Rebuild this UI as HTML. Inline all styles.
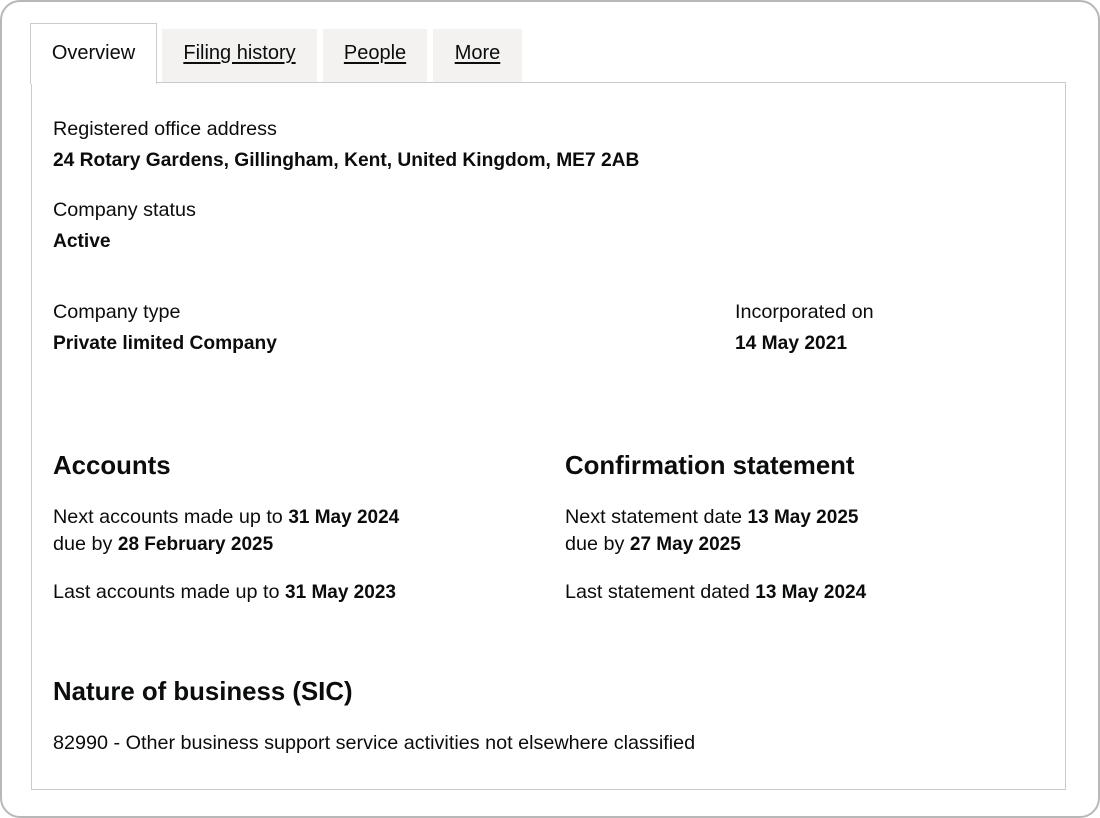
<!DOCTYPE html>
<html><head><meta charset="utf-8"><style>
*{margin:0;padding:0;box-sizing:border-box}
body{width:1100px;height:818px;background:#fff;font-family:"Liberation Sans",Arial,sans-serif;color:#0b0c0c;position:relative;overflow:hidden}
.frame{position:absolute;left:0;top:0;width:1100px;height:818px;border:2px solid #b8b8b8;border-radius:20px}
.panel{position:absolute;left:31px;top:82px;width:1035px;height:708px;border:1px solid #cbcbcb}
.tab{position:absolute;top:29px;height:53px;background:#f3f2f1;font-size:20px;line-height:49px;text-align:center;text-decoration:underline;text-underline-offset:3px}
.active{position:absolute;left:30px;top:23px;width:127px;height:61px;background:#fff;border:1px solid #cbcbcb;border-bottom:none;font-size:20px;line-height:58px;text-align:center}
.t{position:absolute;font-size:19.8px;white-space:nowrap;line-height:22px}
.t b{font-size:19px}
.b{font-weight:bold;font-size:19.2px}
.h{position:absolute;font-size:25.8px;font-weight:bold;white-space:nowrap;line-height:28px}
</style></head><body>
<div class="frame"></div>
<div class="panel"></div>
<div class="active">Overview</div>
<div class="tab" style="left:162px;width:155px">Filing history</div>
<div class="tab" style="left:323px;width:104px">People</div>
<div class="tab" style="left:433px;width:89px">More</div>

<div class="t" style="left:53px;top:118px">Registered office address</div>
<div class="t b" style="left:53px;top:150px">24 Rotary Gardens, Gillingham, Kent, United Kingdom, ME7 2AB</div>
<div class="t" style="left:53px;top:199px">Company status</div>
<div class="t b" style="left:53px;top:231px">Active</div>
<div class="t" style="left:53px;top:301px">Company type</div>
<div class="t b" style="left:53px;top:333px">Private limited Company</div>
<div class="t" style="left:735px;top:301px">Incorporated on</div>
<div class="t b" style="left:735px;top:333px">14 May 2021</div>

<div class="h" style="left:53px;top:452px">Accounts</div>
<div class="t" style="left:53px;top:506px">Next accounts made up to <b>31 May 2024</b></div>
<div class="t" style="left:53px;top:533px">due by <b>28 February 2025</b></div>
<div class="t" style="left:53px;top:581px">Last accounts made up to <b>31 May 2023</b></div>

<div class="h" style="left:565px;top:452px">Confirmation statement</div>
<div class="t" style="left:565px;top:506px">Next statement date <b>13 May 2025</b></div>
<div class="t" style="left:565px;top:533px">due by <b>27 May 2025</b></div>
<div class="t" style="left:565px;top:581px">Last statement dated <b>13 May 2024</b></div>

<div class="h" style="left:53px;top:678px">Nature of business (SIC)</div>
<div class="t" style="left:53px;top:732px">82990 - Other business support service activities not elsewhere classified</div>
</body></html>
